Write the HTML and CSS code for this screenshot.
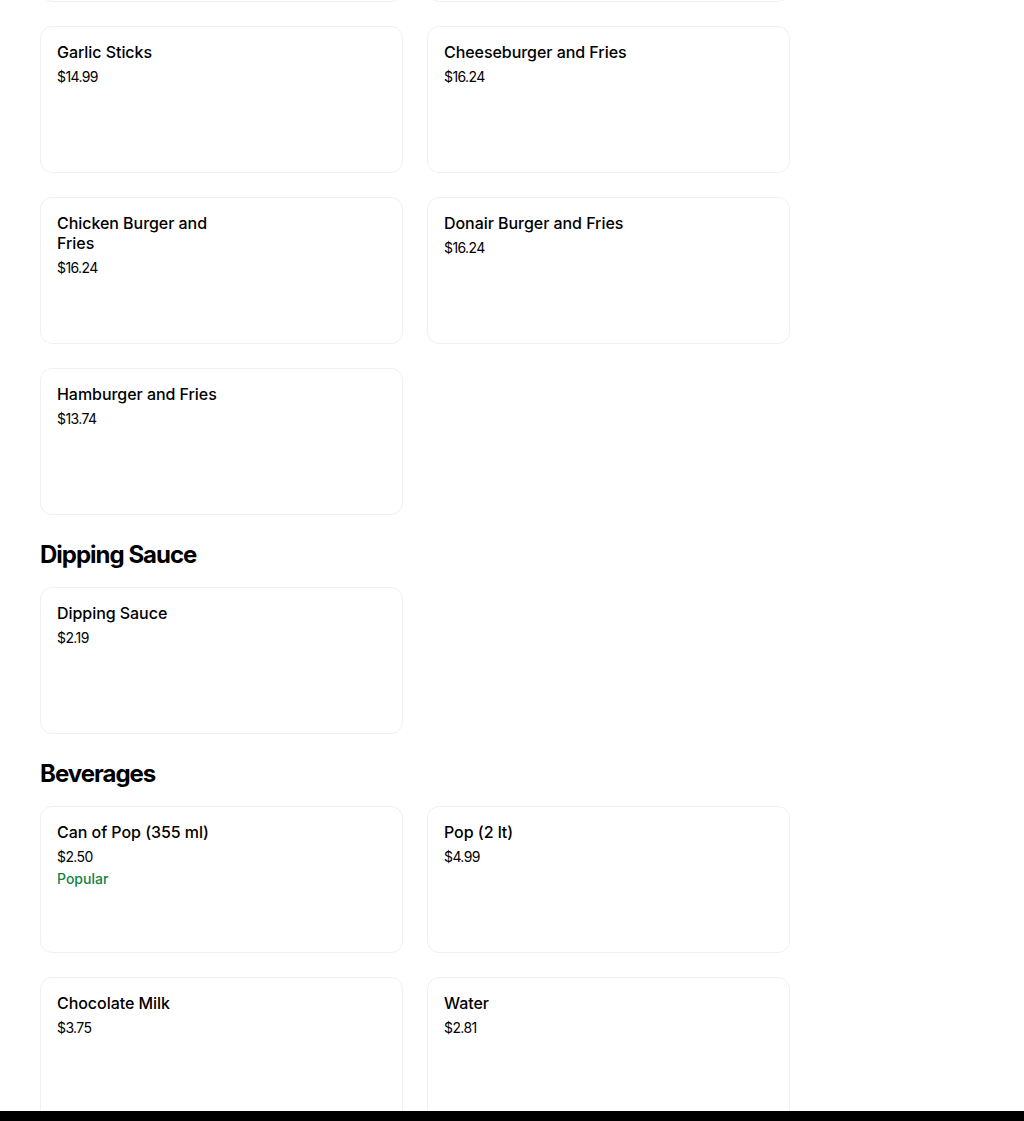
FILE: index.html
```html
<!DOCTYPE html>
<html lang="en">
<head>
<meta charset="utf-8">
<title>Menu</title>
<link rel="stylesheet" href="styles.css">
</head>
<body>
<main class="menu">
  <section class="section">
    <div class="grid">
      <div class="card" aria-hidden="true"></div>
      <div class="card" aria-hidden="true"></div>
      <div class="card">
        <div class="info"><h3 class="title">Garlic Sticks</h3><div class="price">$14.99</div></div>
      </div>
      <div class="card">
        <div class="info"><h3 class="title">Cheeseburger and Fries</h3><div class="price">$16.24</div></div>
      </div>
      <div class="card">
        <div class="info"><h3 class="title">Chicken Burger and Fries</h3><div class="price">$16.24</div></div>
      </div>
      <div class="card">
        <div class="info"><h3 class="title">Donair Burger and Fries</h3><div class="price">$16.24</div></div>
      </div>
      <div class="card">
        <div class="info"><h3 class="title">Hamburger and Fries</h3><div class="price">$13.74</div></div>
      </div>
    </div>
  </section>

  <section class="section">
    <h2 class="heading">Dipping Sauce</h2>
    <div class="grid">
      <div class="card">
        <div class="info"><h3 class="title">Dipping Sauce</h3><div class="price">$2.19</div></div>
      </div>
    </div>
  </section>

  <section class="section">
    <h2 class="heading">Beverages</h2>
    <div class="grid">
      <div class="card">
        <div class="info"><h3 class="title">Can of Pop (355 ml)</h3><div class="price">$2.50</div><div class="tag">Popular</div></div>
      </div>
      <div class="card">
        <div class="info"><h3 class="title">Pop (2 lt)</h3><div class="price">$4.99</div></div>
      </div>
      <div class="card">
        <div class="info"><h3 class="title">Chocolate Milk</h3><div class="price">$3.75</div></div>
      </div>
      <div class="card">
        <div class="info"><h3 class="title">Water</h3><div class="price">$2.81</div></div>
      </div>
    </div>
  </section>
</main>
<div class="bottom-bar"></div>
</body>
</html>
```

FILE: styles.css
```css
* { box-sizing: border-box; }

html, body {
  margin: 0;
  padding: 0;
  background: #ffffff;
  color: #000000;
  font-family: Inter, "Noto Sans", Roboto, "Liberation Sans", sans-serif;
}

.menu {
  width: 750px;
  margin: -145px 0 0 40px;
  padding-bottom: 40px;
}

.section + .section {
  margin-top: 24px;
}

.heading {
  margin: 0 0 16px 0;
  font-size: 24px;
  line-height: 32px;
  font-weight: 700;
  letter-spacing: -1px;
}

.grid {
  display: grid;
  grid-template-columns: 363px 363px;
  gap: 24px;
}

.card {
  height: 147px;
  border: 1px solid #f0f0f0;
  border-radius: 12px;
  padding: 15px 16px 16px 16px;
  background: #ffffff;
}

.info {
  max-width: 186px;
}

.title {
  margin: 0;
  font-size: 16px;
  line-height: 20px;
  font-weight: 500;
  letter-spacing: -0.05px;
}

.price {
  margin-top: 5px;
  font-size: 14px;
  line-height: 20px;
  font-weight: 400;
  letter-spacing: -0.6px;
  color: #000000;
}

.tag {
  margin-top: 2px;
  font-size: 14px;
  line-height: 20px;
  font-weight: 500;
  color: #0e8345;
}

.bottom-bar {
  position: fixed;
  left: 0;
  right: 0;
  bottom: 0;
  height: 10px;
  background: #000000;
}
```
